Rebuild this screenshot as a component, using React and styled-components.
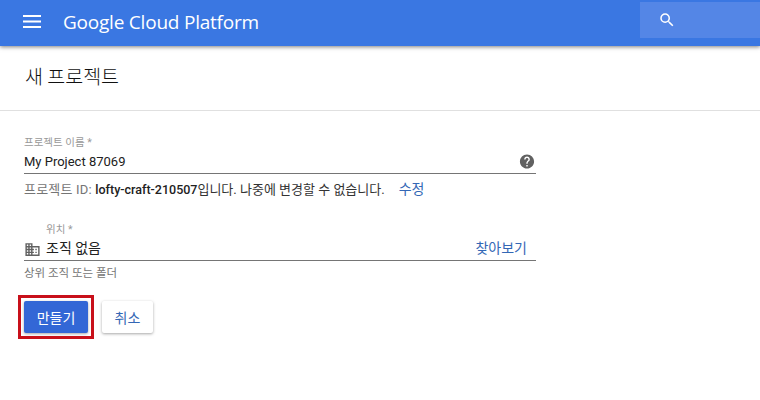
import React from 'react'
import styled, { createGlobalStyle } from 'styled-components'

const Global = createGlobalStyle`
  html, body { margin: 0; padding: 0; background: #fff; }
  body { font-family: Roboto, "Noto Sans CJK KR", sans-serif; }
`

const Page = styled.div`
  width: 760px;
  height: 400px;
  overflow: hidden;
  background: #fff;
`

const Header = styled.header`
  height: 46px;
  background: #3a77e2;
  box-shadow: 0 1px 4px rgba(0, 0, 0, 0.5);
  display: flex;
  align-items: center;
  position: relative;
  padding-left: 23px;
`

const Menu = styled.svg`
  width: 18px;
  height: 13px;
  fill: #fff;
  flex: none;
  margin-top: -3px;
`

const Brand = styled.div`
  margin-left: 22px;
  color: #fff;
  font-family: "Open Sans", Roboto, sans-serif;
  font-size: 19px;
  letter-spacing: -0.22px;
  flex: 1;
  margin-top: -2px;
`

const Search = styled.div`
  width: 120px;
  height: 36px;
  margin-top: -6px;
  background: #5486e6;
  display: flex;
  align-items: center;
  padding-left: 18px;
  box-sizing: border-box;
`

const TitleBar = styled.div`
  height: 65px;
  box-sizing: border-box;
  border-bottom: 1px solid #e0e0e0;
  padding: 17px 0 0 25px;
  font-size: 19.5px;
  line-height: 26px;
  color: #111;
  font-family: "Noto Sans CJK KR", sans-serif;
  font-weight: 300;
`

const Form = styled.div`
  padding: 26px 0 0 24px;
  width: 512px;
`

const Label = styled.div`
  font-size: 10.5px;
  line-height: 12px;
  color: #999;
  padding-left: ${p => p.$indent || 0}px;
`

const InputRow = styled.div`
  height: ${p => 24 - (p.$raise || 0)}px;
  padding-bottom: ${p => p.$raise || 0}px;
  border-bottom: 1px solid #757575;
  display: flex;
  align-items: center;
  font-size: 13px;
  color: #212121;
`

const Value = styled.span`
  flex: 1;
  margin-left: ${p => p.$gap || 0}px;
  font-size: ${p => p.$size || 13}px;
`

const HelpIcon = styled.svg`
  width: 17px;
  height: 17px;
  fill: #616161;
  transform: translateX(-0.5px);
  flex: none;
`

const BuildingIcon = styled.svg`
  width: 17px;
  height: 17px;
  fill: #616161;
  margin-top: 6px;
  flex: none;
`

const Hint = styled.div`
  font-size: ${p => (p.$small ? 11.5 : 13)}px;
  line-height: 16px;
  margin-top: ${p => (p.$small ? 4 : 7)}px;
  color: #757575;
  letter-spacing: ${p => (p.$small ? 0 : 0.2)}px;
  white-space: nowrap;
`

const Strong = styled.b`
  font-weight: 500;
  font-size: 12.5px;
  letter-spacing: 0;
  color: #212121;
`

const Dark = styled.span`
  color: #333;
  letter-spacing: 0;
`

const Link = styled.a`
  color: #3367b5;
  font-size: 14px;
  letter-spacing: 0;
  margin-left: ${p => p.$gap || 0}px;
  margin-right: ${p => p.$right || 0}px;
`

const Spacer = styled.div`
  height: 26px;
`

const Actions = styled.div`
  display: flex;
  gap: 14px;
  margin-top: 20px;
`

const Marked = styled.div`
  position: relative;
  display: flex;

  &::after {
    content: '';
    position: absolute;
    inset: -6px;
    border: 3px solid #c8101a;
    pointer-events: none;
  }
`

const Button = styled.button`
  height: 32px;
  padding: 0;
  width: ${p => p.$w}px;
  border: 0;
  border-radius: 2px;
  font-family: inherit;
  font-size: 14px;
  background: ${p => (p.$primary ? '#3367d6' : '#fff')};
  color: ${p => (p.$primary ? '#fff' : '#3367b5')};
  box-shadow: 0 1px 3px rgba(0, 0, 0, 0.35);
`

export default function App() {
  return (
    <Page>
      <Global />
      <Header>
        <Menu viewBox="0 0 18 13">
          <rect x="0" y="0" width="18" height="2" />
          <rect x="0" y="5.5" width="18" height="2" />
          <rect x="0" y="11" width="18" height="2" />
        </Menu>
        <Brand>Google Cloud Platform</Brand>
        <Search>
          <svg width="18" height="18" viewBox="0 0 24 24" fill="#fff">
            <path d="M15.5 14h-.79l-.28-.27A6.47 6.47 0 0 0 16 9.5 6.5 6.5 0 1 0 9.5 16c1.61 0 3.09-.59 4.23-1.57l.27.28v.79l5 4.99L20.49 19l-4.99-5zm-6 0C7.01 14 5 11.99 5 9.5S7.01 5 9.5 5 14 7.01 14 9.5 11.99 14 9.5 14z" />
          </svg>
        </Search>
      </Header>
      <TitleBar>새 프로젝트</TitleBar>
      <Form>
        <Label>프로젝트 이름 *</Label>
        <InputRow>
          <Value>My Project 87069</Value>
          <HelpIcon viewBox="0 0 24 24">
            <path d="M12 2C6.48 2 2 6.48 2 12s4.48 10 10 10 10-4.48 10-10S17.52 2 12 2zm1 17h-2v-2h2v2zm2.07-7.75l-.9.92C13.45 12.9 13 13.5 13 15h-2v-.5c0-1.1.45-2.1 1.17-2.83l1.24-1.26c.37-.36.59-.86.59-1.41 0-1.1-.9-2-2-2s-2 .9-2 2H8c0-2.21 1.79-4 4-4s4 1.79 4 4c0 .88-.36 1.68-.93 2.25z" />
          </HelpIcon>
        </InputRow>
        <Hint>
          프로젝트 ID: <Strong>lofty-craft-210507</Strong><Dark>입니다. 나중에 변경할 수 없습니다.</Dark>
          <Link $gap={14}>수정</Link>
        </Hint>
        <Spacer />
        <Label $indent={22}>위치 *</Label>
        <InputRow $raise={3}>
          <BuildingIcon viewBox="0 0 24 24">
            <path d="M12 7V3H2v18h20V7H12zM6 19H4v-2h2v2zm0-4H4v-2h2v2zm0-4H4V9h2v2zm0-4H4V5h2v2zm4 12H8v-2h2v2zm0-4H8v-2h2v2zm0-4H8V9h2v2zm0-4H8V5h2v2zm10 12h-8v-2h2v-2h-2v-2h2v-2h-2V9h8v10zm-2-8h-2v2h2v-2zm0 4h-2v2h2v-2z" />
          </BuildingIcon>
          <Value $gap={5} $size={14}>조직 없음</Value>
          <Link $right={9}>찾아보기</Link>
        </InputRow>
        <Hint $small>상위 조직 또는 폴더</Hint>
        <Actions>
          <Marked>
            <Button $primary $w={64}>만들기</Button>
          </Marked>
          <Button $w={51}>취소</Button>
        </Actions>
      </Form>
    </Page>
  )
}
